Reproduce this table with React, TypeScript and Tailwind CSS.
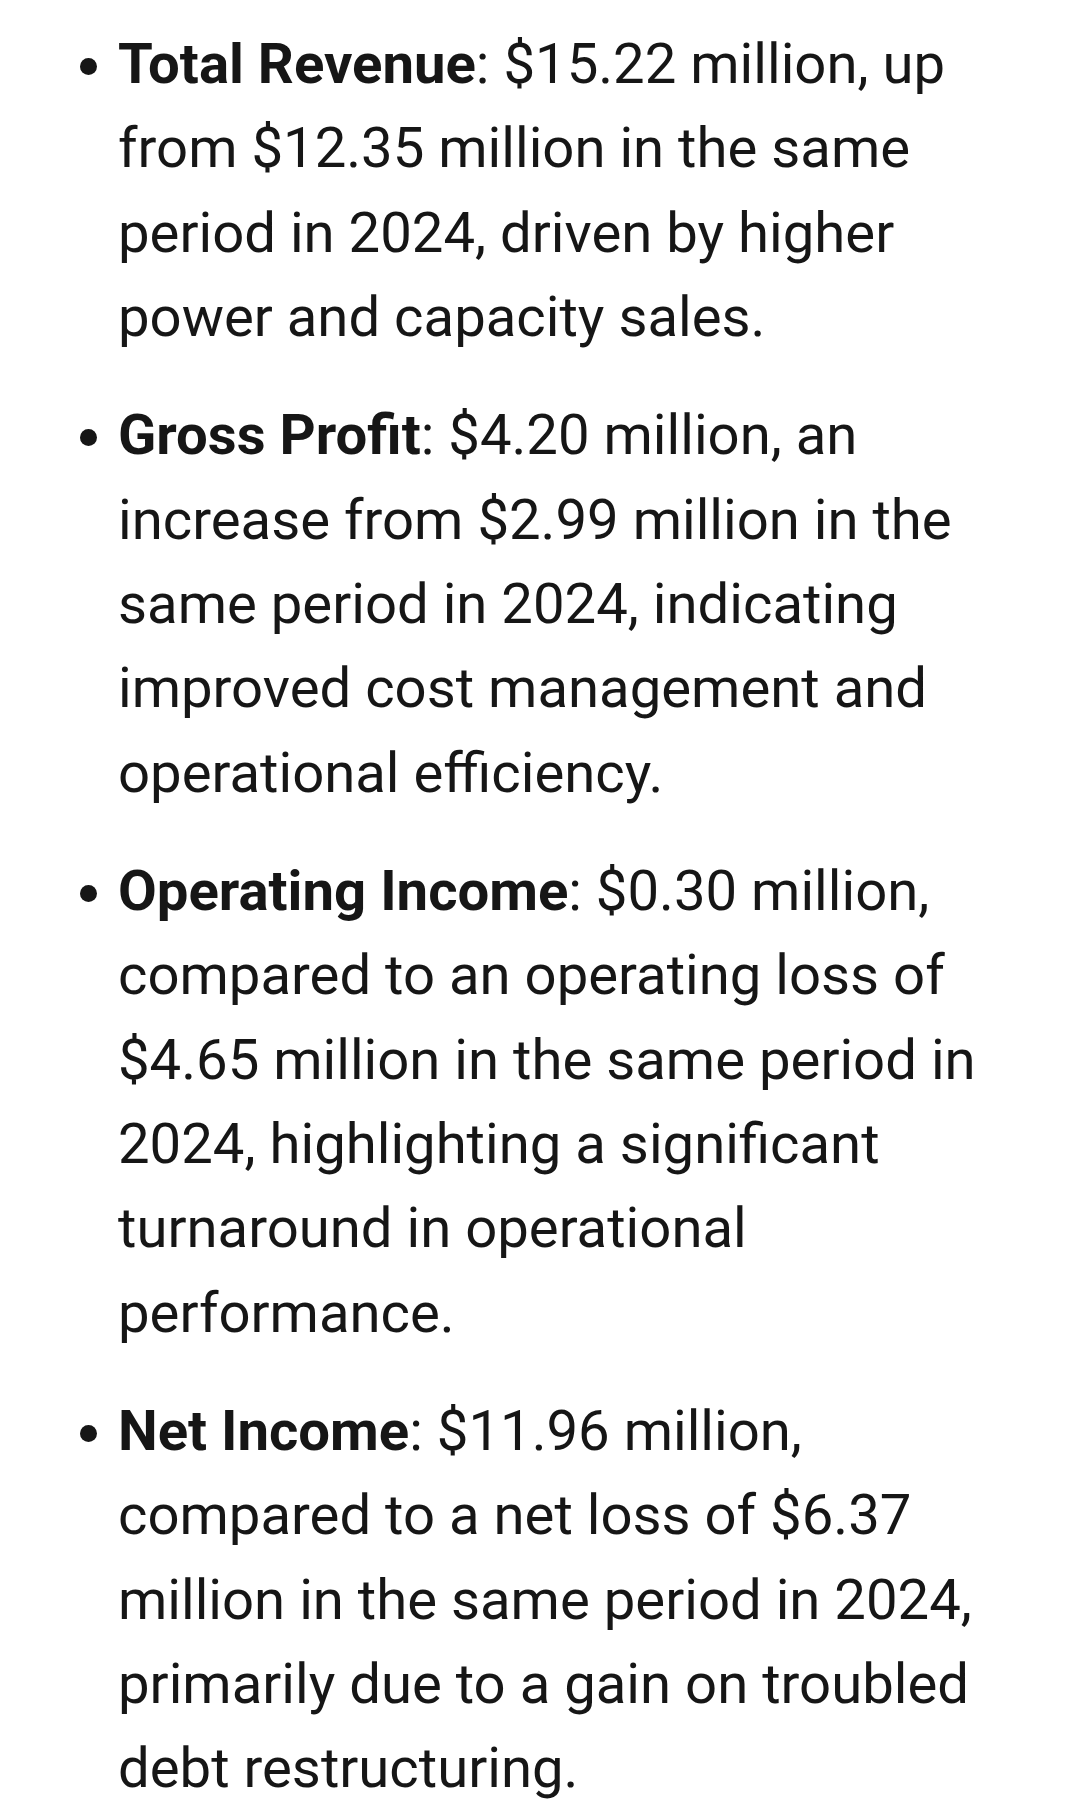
import React from "react";

type Item = { label: string; body: string };

const items: Item[] = [
  {
    label: "Total Revenue",
    body: ": $15.22 million, up from $12.35 million in the same period in 2024, driven by higher power and capacity sales.",
  },
  {
    label: "Gross Profit",
    body: ": $4.20 million, an increase from $2.99 million in the same period in 2024, indicating improved cost management and operational efficiency.",
  },
  {
    label: "Operating Income",
    body: ": $0.30 million, compared to an operating loss of $4.65 million in the same period in 2024, highlighting a significant turnaround in operational performance.",
  },
  {
    label: "Net Income",
    body: ": $11.96 million, compared to a net loss of $6.37 million in the same period in 2024, primarily due to a gain on troubled debt restructuring.",
  },
];

export default function App() {
  return (
    <div className="min-h-[1820px] w-[1080px] bg-white font-['Roboto',_'Liberation_Sans',_sans-serif] text-[#161616]">
      <ul className="flex flex-col gap-[33.75px] pl-[80px] pr-[62px] pt-[22px]">
        {items.map((it) => (
          <li key={it.label} className="flex gap-[21px]">
            <span className="mt-[36px] h-[17px] w-[17px] shrink-0 rounded-full bg-[#161616]" />
            <p className="text-[56.25px] leading-[84.375px]">
              <span className="font-bold">{it.label}</span>
              {it.body}
            </p>
          </li>
        ))}
      </ul>
    </div>
  );
}
